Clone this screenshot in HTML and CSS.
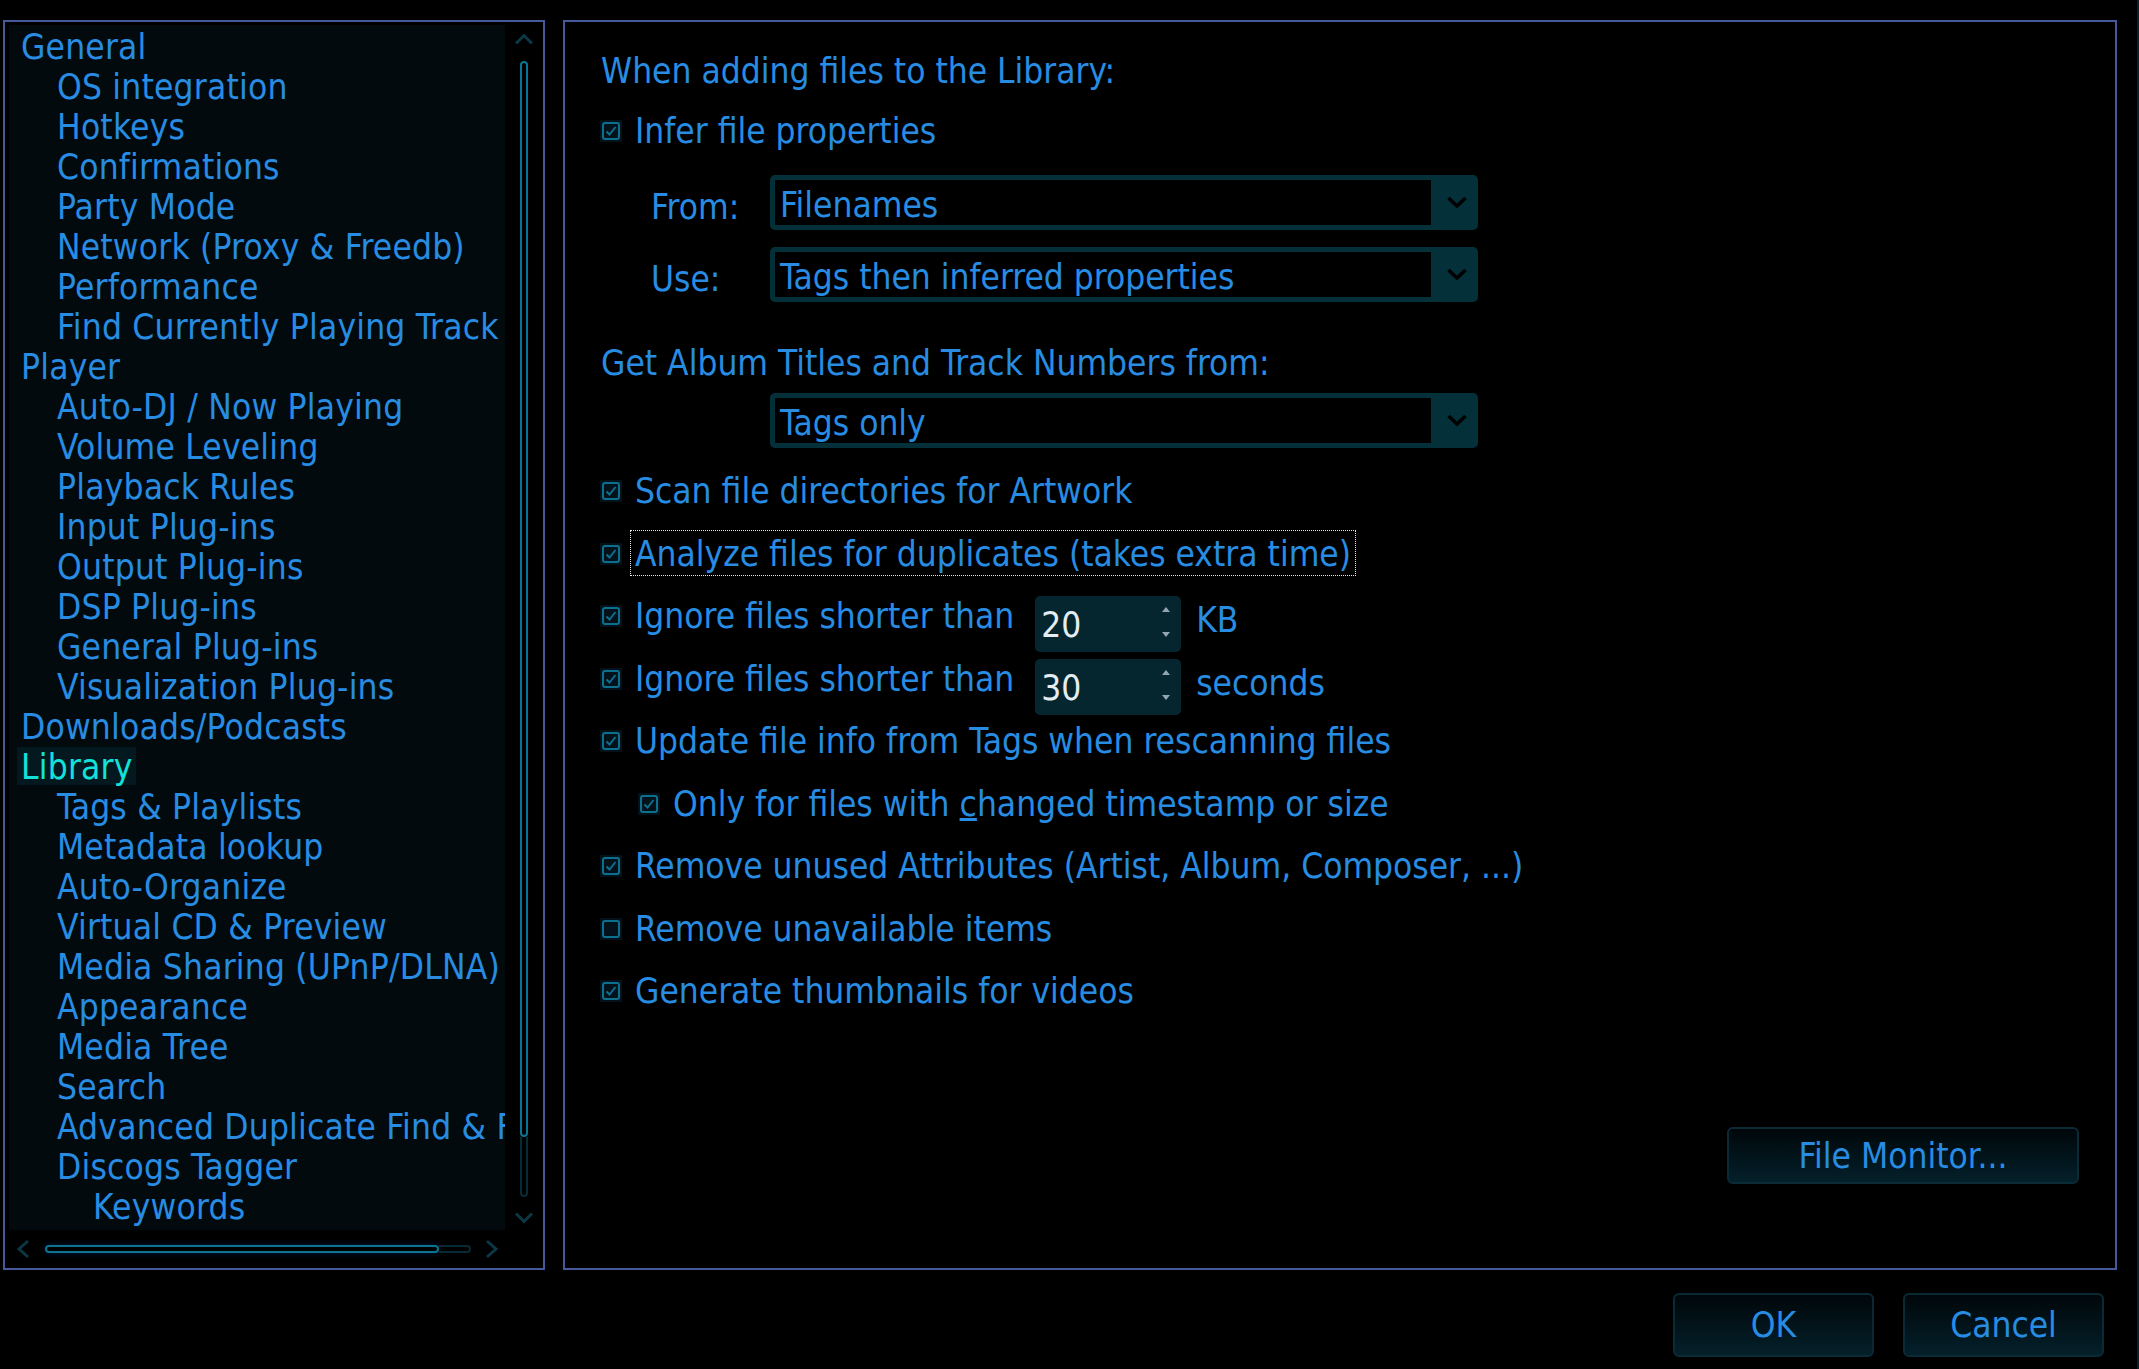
FILE: index.html
```html
<!DOCTYPE html>
<html>
<head>
<meta charset="utf-8">
<title>Options - Library</title>
<link rel="stylesheet" href="styles.css">
</head>
<body>
<div class="dialog">
  <div class="panes">
    <div class="tree-pane">
      <div class="tree-wrap">
        <div class="tree">
          <div class="node l0">General</div>
          <div class="node l1">OS integration</div>
          <div class="node l1">Hotkeys</div>
          <div class="node l1">Confirmations</div>
          <div class="node l1">Party Mode</div>
          <div class="node l1">Network (Proxy &amp; Freedb)</div>
          <div class="node l1">Performance</div>
          <div class="node l1">Find Currently Playing Track</div>
          <div class="node l0">Player</div>
          <div class="node l1">Auto-DJ / Now Playing</div>
          <div class="node l1">Volume Leveling</div>
          <div class="node l1">Playback Rules</div>
          <div class="node l1">Input Plug-ins</div>
          <div class="node l1">Output Plug-ins</div>
          <div class="node l1">DSP Plug-ins</div>
          <div class="node l1">General Plug-ins</div>
          <div class="node l1">Visualization Plug-ins</div>
          <div class="node l0">Downloads/Podcasts</div>
          <div class="node l0"><span class="selected">Library</span></div>
          <div class="node l1">Tags &amp; Playlists</div>
          <div class="node l1">Metadata lookup</div>
          <div class="node l1">Auto-Organize</div>
          <div class="node l1">Virtual CD &amp; Preview</div>
          <div class="node l1">Media Sharing (UPnP/DLNA)</div>
          <div class="node l1">Appearance</div>
          <div class="node l1">Media Tree</div>
          <div class="node l1">Search</div>
          <div class="node l1">Advanced Duplicate Find &amp; Fix</div>
          <div class="node l1">Discogs Tagger</div>
          <div class="node l2">Keywords</div>
        </div>
        <div class="vscroll">
          <svg class="arr-v" width="20" height="12" viewBox="0 0 20 12"><path d="M2 10.5 L10 2.5 L18 10.5" fill="none" stroke="#0a3845" stroke-width="3"/></svg>
          <div class="vtrack">
            <div class="vthumb"></div>
            <div class="vrest"></div>
          </div>
          <svg class="arr-v" width="20" height="12" viewBox="0 0 20 12"><path d="M2 1.5 L10 9.5 L18 1.5" fill="none" stroke="#0a3845" stroke-width="3"/></svg>
        </div>
      </div>
      <div class="hscroll">
        <svg class="arr-h" width="14" height="20" viewBox="0 0 14 20"><path d="M12 2 L3 10 L12 18" fill="none" stroke="#0a3845" stroke-width="3"/></svg>
        <div class="htrack">
          <div class="hthumb"></div>
          <div class="hrest"></div>
        </div>
        <svg class="arr-h" width="14" height="20" viewBox="0 0 14 20"><path d="M2 2 L11 10 L2 18" fill="none" stroke="#0a3845" stroke-width="3"/></svg>
      </div>
    </div>

    <div class="main-pane">
      <div class="heading">When adding files to the Library:</div>
      <div class="opt infer">
        <span class="cb"><svg viewBox="0 0 18 18" width="18" height="18"><path d="M4.5 9.5 L7.5 12.5 L13.5 5" fill="none" stroke="#0b6f8e" stroke-width="2"/></svg></span>
        <span class="txt">Infer file properties</span>
      </div>
      <div class="field-row first">
        <span class="flabel">From:</span>
        <div class="combo"><span class="ctext">Filenames</span><span class="cbtn"><svg width="22" height="13" viewBox="0 0 22 13"><path d="M2.5 2 L11 10 L19.5 2" fill="none" stroke="#000" stroke-width="3.5"/></svg></span></div>
      </div>
      <div class="field-row second">
        <span class="flabel">Use:</span>
        <div class="combo"><span class="ctext">Tags then inferred properties</span><span class="cbtn"><svg width="22" height="13" viewBox="0 0 22 13"><path d="M2.5 2 L11 10 L19.5 2" fill="none" stroke="#000" stroke-width="3.5"/></svg></span></div>
      </div>
      <div class="heading second-heading">Get Album Titles and Track Numbers from:</div>
      <div class="field-row third">
        <div class="combo"><span class="ctext">Tags only</span><span class="cbtn"><svg width="22" height="13" viewBox="0 0 22 13"><path d="M2.5 2 L11 10 L19.5 2" fill="none" stroke="#000" stroke-width="3.5"/></svg></span></div>
      </div>

      <div class="options">
        <div class="opt row">
          <span class="cb"><svg viewBox="0 0 18 18" width="18" height="18"><path d="M4.5 9.5 L7.5 12.5 L13.5 5" fill="none" stroke="#0b6f8e" stroke-width="2"/></svg></span>
          <span class="txt">Scan file directories for Artwork</span>
        </div>
        <div class="opt row">
          <span class="cb"><svg viewBox="0 0 18 18" width="18" height="18"><path d="M4.5 9.5 L7.5 12.5 L13.5 5" fill="none" stroke="#0b6f8e" stroke-width="2"/></svg></span>
          <span class="txt focus">Analyze files for duplicates (takes extra time)</span>
        </div>
        <div class="opt row">
          <span class="cb"><svg viewBox="0 0 18 18" width="18" height="18"><path d="M4.5 9.5 L7.5 12.5 L13.5 5" fill="none" stroke="#0b6f8e" stroke-width="2"/></svg></span>
          <span class="txt">Ignore files shorter than</span>
          <div class="spin"><span class="sval">20</span><span class="sarrows"><svg width="8" height="5" viewBox="0 0 8 5"><path d="M0 5 L4 0 L8 5Z" fill="#93a6b0"/></svg><svg width="8" height="5" viewBox="0 0 8 5"><path d="M0 0 L4 5 L8 0Z" fill="#93a6b0"/></svg></span></div>
          <span class="unit">KB</span>
        </div>
        <div class="opt row">
          <span class="cb"><svg viewBox="0 0 18 18" width="18" height="18"><path d="M4.5 9.5 L7.5 12.5 L13.5 5" fill="none" stroke="#0b6f8e" stroke-width="2"/></svg></span>
          <span class="txt">Ignore files shorter than</span>
          <div class="spin"><span class="sval">30</span><span class="sarrows"><svg width="8" height="5" viewBox="0 0 8 5"><path d="M0 5 L4 0 L8 5Z" fill="#93a6b0"/></svg><svg width="8" height="5" viewBox="0 0 8 5"><path d="M0 0 L4 5 L8 0Z" fill="#93a6b0"/></svg></span></div>
          <span class="unit">seconds</span>
        </div>
        <div class="opt row">
          <span class="cb"><svg viewBox="0 0 18 18" width="18" height="18"><path d="M4.5 9.5 L7.5 12.5 L13.5 5" fill="none" stroke="#0b6f8e" stroke-width="2"/></svg></span>
          <span class="txt">Update file info from Tags when rescanning files</span>
        </div>
        <div class="opt row sub">
          <span class="cb"><svg viewBox="0 0 18 18" width="18" height="18"><path d="M4.5 9.5 L7.5 12.5 L13.5 5" fill="none" stroke="#0b6f8e" stroke-width="2"/></svg></span>
          <span class="txt">Only for files with <u>c</u>hanged timestamp or size</span>
        </div>
        <div class="opt row">
          <span class="cb"><svg viewBox="0 0 18 18" width="18" height="18"><path d="M4.5 9.5 L7.5 12.5 L13.5 5" fill="none" stroke="#0b6f8e" stroke-width="2"/></svg></span>
          <span class="txt">Remove unused Attributes (Artist, Album, Composer, ...)</span>
        </div>
        <div class="opt row">
          <span class="cb"></span>
          <span class="txt">Remove unavailable items</span>
        </div>
        <div class="opt row">
          <span class="cb"><svg viewBox="0 0 18 18" width="18" height="18"><path d="M4.5 9.5 L7.5 12.5 L13.5 5" fill="none" stroke="#0b6f8e" stroke-width="2"/></svg></span>
          <span class="txt">Generate thumbnails for videos</span>
        </div>
      </div>

      <div class="btn monitor">File Monitor...</div>
    </div>
  </div>
  <div class="footer">
    <div class="btn dlg">OK</div>
    <div class="btn dlg">Cancel</div>
  </div>
</div>
</body>
</html>
```
FILE: styles.css
```css
html, body {
  margin: 0;
  padding: 0;
  background: #000;
}
body {
  font-family: "DejaVu Sans Condensed", "DejaVu Sans", sans-serif;
  font-size: 35px;
  line-height: 40px;
  color: #278ce2;
}
.dialog {
  width: 2139px;
  height: 1369px;
  box-sizing: border-box;
  padding: 20px 0 0 3px;
  border-right: 2px solid #05212b;
  display: flex;
  flex-direction: column;
}
.panes {
  display: flex;
  gap: 18px;
  height: 1250px;
}
.tree-pane {
  width: 542px;
  height: 1250px;
  box-sizing: border-box;
  border: 2px solid #46599a;
  display: flex;
  flex-direction: column;
}
.tree-wrap {
  display: flex;
  margin-top: 3px;
  height: 1205px;
}
.tree {
  margin-left: 4px;
  width: 496px;
  height: 1205px;
  box-sizing: border-box;
  padding-top: 2px;
  background: #020a0e;
  overflow: hidden;
  white-space: nowrap;
  letter-spacing: 0.2px;
}
.node { height: 40px; }
.l0 { padding-left: 12px; }
.l1 { padding-left: 48px; }
.l2 { padding-left: 84px; }
.selected {
  display: inline-block;
  margin-left: -4px;
  padding: 3px 4px 0;
  line-height: 35px;
  background: #03191f;
  color: #12e2da;
}
.vscroll {
  flex: 1;
  display: flex;
  flex-direction: column;
  align-items: center;
  padding-top: 8px;
}
.arr-v { display: block; }
.vtrack {
  width: 8px;
  height: 1136px;
  margin: 16px 0 15px;
  display: flex;
  flex-direction: column;
}
.vthumb {
  height: 1076px;
  box-sizing: border-box;
  border: 2px solid #0a7592;
  border-radius: 4px;
}
.vrest {
  flex: 1;
  box-sizing: border-box;
  border: 2px solid #062b35;
  border-top: none;
  border-radius: 0 0 4px 4px;
}
.hscroll {
  flex: 1;
  display: flex;
  align-items: center;
  padding-left: 11px;
}
.arr-h { display: block; }
.htrack {
  width: 426px;
  height: 8px;
  margin: 0 14px 0 15px;
  display: flex;
}
.hthumb {
  width: 394px;
  box-sizing: border-box;
  border: 2px solid #0a7592;
  border-radius: 4px;
  box-shadow: 0 0 6px #021a40;
}
.hrest {
  flex: 1;
  box-sizing: border-box;
  border: 2px solid #062b35;
  border-left: none;
  border-radius: 0 4px 4px 0;
}

.main-pane {
  width: 1554px;
  height: 1250px;
  box-sizing: border-box;
  border: 2px solid #46599a;
  padding: 29px 0 0 35px;
  display: flex;
  flex-direction: column;
  white-space: nowrap;
}
.heading { margin-left: 1px; height: 40px; }
.second-heading { margin-top: 41px; }
.opt { display: flex; align-items: flex-start; height: 40px; }
.infer { margin-top: 20px; }
.cb {
  width: 22px;
  height: 22px;
  margin-top: 9px;
  background: #03121a;
  position: relative;
  flex: none;
}
.cb::before {
  content: "";
  position: absolute;
  left: 2px; top: 2px;
  width: 18px; height: 18px;
  box-sizing: border-box;
  border: 2px solid #0b6f8e;
  border-radius: 3px;
}
.cb svg { position: absolute; left: 2px; top: 2px; }
.txt { margin-left: 13px; }
.focus {
  margin-left: 8px;
  padding: 3px 4px 1px 4px;
  border: 1px dotted #e2ebf3;
  margin-top: -4px;
}
.field-row { display: flex; align-items: flex-start; }
.field-row.first { margin-top: 24px; }
.field-row.second { margin-top: 17px; }
.field-row.third { margin-top: 10px; margin-left: 170px; }
.flabel {
  width: 119px;
  margin-left: 51px;
  padding-top: 12px;
}
.combo {
  width: 708px;
  height: 55px;
  box-sizing: border-box;
  border: 5px solid #04303a;
  border-radius: 5px;
  display: flex;
  background: #000;
}
.ctext { flex: 1; padding: 5px 0 0 5px; }
.cbtn {
  width: 42px;
  box-sizing: border-box;
  background: #04303a;
  display: flex;
  align-items: center;
  justify-content: center;
  padding-left: 10px;
}
.cbtn svg { display: block; flex: none; }
.options { margin-top: 23px; display: flex; flex-direction: column; }
.row { height: 62.5px; }
.sub { padding-left: 38px; }
.spin {
  width: 146px;
  height: 56px;
  margin-left: 21px;
  background: #05262f;
  border-radius: 5px;
  display: flex;
  color: #e4edf2;
}
.sval { flex: 1; padding: 9px 0 0 6px; }
.sarrows {
  width: 30px;
  display: flex;
  flex-direction: column;
  align-items: center;
  gap: 20px;
  padding-top: 11px;
}
.sarrows svg { display: block; }
.unit { margin-left: 15px; padding-top: 4px; }

.btn {
  box-sizing: border-box;
  border: 2px solid #0a2b36;
  border-radius: 6px;
  background: linear-gradient(#00070a, #04202a);
  text-align: center;
  display: flex;
  align-items: center;
  justify-content: center;
}
.monitor {
  width: 352px;
  height: 57px;
  margin-top: auto;
  margin-bottom: 84px;
  align-self: flex-end;
  margin-right: 36px;
}
.footer {
  display: flex;
  justify-content: flex-end;
  gap: 29px;
  margin-top: 23px;
  padding-right: 33px;
}
.dlg { width: 201px; height: 64px; }
```
